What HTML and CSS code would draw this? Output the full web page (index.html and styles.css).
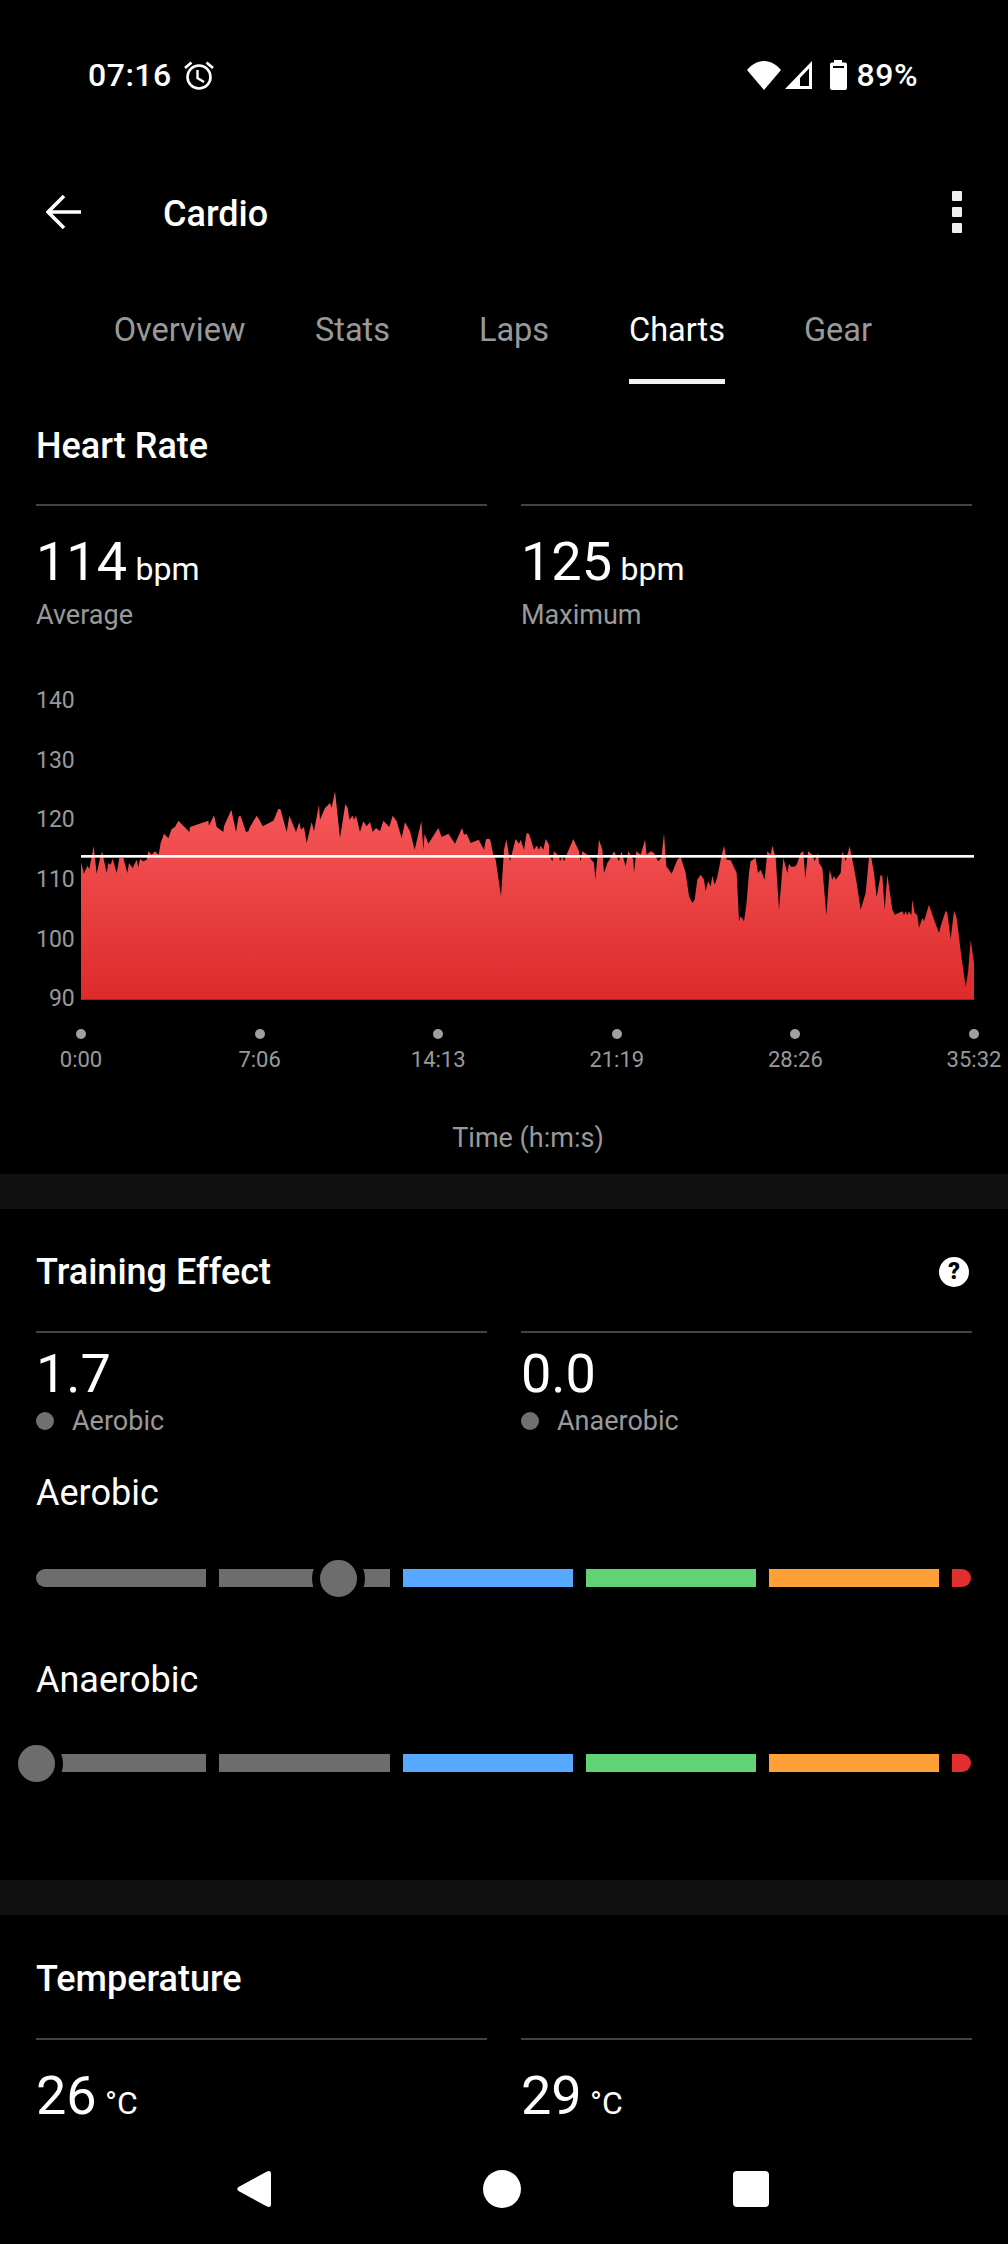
FILE: index.html
```html
<!DOCTYPE html>
<html lang="en">
<head>
<meta charset="utf-8">
<title>Cardio</title>
<link rel="stylesheet" href="styles.css">
</head>
<body>
<div class="screen">
  <main class="content">
    <div class="statusbar">
      <div class="status-left">
        <span>07:16</span>
        <svg class="alarm" viewBox="0 0 30 29"><circle cx="15" cy="16" r="11.500" fill="none" stroke="#fff" stroke-width="2.600"/><path d="M13.500 9V17L20 21" fill="none" stroke="#fff" stroke-width="2.400"/><path d="M1 7L7.500 1.500M29 7L22.500 1.500" stroke="#fff" stroke-width="2.800" fill="none"/></svg>
      </div>
      <div class="status-right">
        <svg class="wifi" viewBox="0 0 34 29"><path d="M17 29L0 9C4 4 10 0 17 0S30 4 34 9Z" fill="#fff"/></svg>
        <svg class="signal" viewBox="0 0 27 28"><path fill-rule="evenodd" d="M27 0V28H0ZM24 7.500L15 17V25H24Z" fill="#fff"/></svg>
        <svg class="battery" viewBox="0 0 17 30"><path fill-rule="evenodd" d="M4 0H12V2.500H15Q17 2.500 17 4.500V28Q17 30 15 30H2Q0 30 0 28V4.500Q0 2.500 2 2.500H4ZM3 6V8H14V6Z" fill="#fff"/></svg>
        <span>89%</span>
      </div>
    </div>

    <header class="toolbar">
      <svg class="back" viewBox="0 0 36 36"><path d="M35 18H3M18 2L2 18L18 34" fill="none" stroke="#fff" stroke-width="3.600"/></svg>
      <h1 class="toolbar-title">Cardio</h1>
      <div class="overflow"><i></i><i></i><i></i></div>
    </header>

    <nav class="tabs">
      <div class="tab"><span>Overview</span></div>
      <div class="tab"><span>Stats</span></div>
      <div class="tab"><span>Laps</span></div>
      <div class="tab active"><span>Charts</span></div>
      <div class="tab"><span>Gear</span></div>
    </nav>

    <section class="card card-hr">
      <h2 class="title">Heart Rate</h2>
      <div class="stats">
        <div class="stat">
          <div class="value">114 <small>bpm</small></div>
          <div class="label">Average</div>
        </div>
        <div class="stat">
          <div class="value">125 <small>bpm</small></div>
          <div class="label">Maximum</div>
        </div>
      </div>

      <div class="chart">
        <div class="y-axis">
          <span>140</span><span>130</span><span>120</span><span>110</span><span>100</span><span>90</span>
        </div>
        <svg class="plot" viewBox="243 100 2679 680" preserveAspectRatio="none">
          <defs>
            <linearGradient id="hr" x1="0" y1="0" x2="0" y2="1">
              <stop offset="0" stop-color="#f75a5c"/>
              <stop offset="1" stop-color="#de2a2b"/>
            </linearGradient>
          </defs>
          <path fill="url(#hr)" d="M243 780V368L252 402 262 378 268 388 281 320 290 402 298 365 306 335 320 400 325 370 332 375 338 358 350 400 358 355 370 355 382 400 387 370 398 385 410 360 415 382 420 358 430 365 440 360 445 335 455 345 465 335 476 345 482 310 492 282 505 296 515 268 525 262 535 243 568 277 570 262 625 243 627 258 642 227 650 262 670 277 672 260 694 210 708 277 716 230 722 230 738 277 745 275 750 262 770 228 778 240 788 260 820 243 835 208 841 208 860 277 868 228 888 277 898 248 903 270 912 262 920 310 935 247 942 275 957 195 960 240 975 205 990 190 995 205 1005 155 1020 295 1036 193 1043 205 1048 240 1058 228 1062 240 1068 228 1080 277 1090 245 1100 260 1110 247 1118 277 1128 265 1140 275 1150 243 1168 262 1178 228 1190 245 1205 295 1215 248 1230 275 1244 330 1264 245 1270 330 1274 282 1285 312 1315 265 1325 292 1345 282 1365 312 1386 265 1392 285 1400 282 1412 310 1436 300 1452 330 1458 298 1470 298 1480 345 1487 360 1503 470 1512 330 1519 300 1530 365 1547 298 1557 312 1562 300 1572 330 1580 280 1587 282 1602 330 1610 318 1617 330 1622 318 1630 330 1637 298 1647 315 1647 345 1657 365 1662 335 1677 350 1680 365 1687 352 1692 365 1702 340 1720 298 1737 335 1742 365 1747 335 1762 345 1782 370 1786 420 1797 300 1807 330 1812 400 1822 370 1832 355 1842 335 1857 365 1864 335 1877 380 1885 335 1900 360 1902 400 1909 335 1922 345 1935 300 1940 345 1952 335 1962 340 1974 365 1984 355 1992 282 1999 380 2015 402 2032 360 2042 352 2057 400 2067 470 2077 490 2084 480 2092 420 2102 405 2112 420 2117 455 2124 425 2132 440 2137 408 2144 435 2152 412 2162 360 2172 318 2180 360 2192 362 2210 400 2217 545 2222 530 2232 545 2239 497 2247 400 2252 365 2267 355 2274 400 2282 390 2294 420 2302 335 2312 345 2317 318 2327 355 2337 510 2350 355 2362 400 2367 372 2374 382 2387 380 2392 370 2402 340 2410 335 2416 418 2424 335 2437 345 2444 365 2454 340 2457 370 2467 385 2479 527 2489 390 2497 420 2502 408 2507 420 2522 400 2527 335 2537 365 2549 320 2562 385 2570 430 2582 510 2597 460 2607 355 2614 355 2622 400 2630 472 2642 405 2647 410 2654 510 2662 405 2677 510 2684 525 2707 515 2712 527 2717 515 2722 527 2727 515 2734 527 2737 480 2744 520 2752 527 2757 565 2767 535 2772 545 2787 495 2802 540 2817 580 2822 560 2837 513 2842 520 2852 598 2862 513 2870 535 2884 650 2897 742 2904 700 2912 602 2922 670V780Z"/>
          <rect class="avg" x="243" y="346" width="2679" height="8"/>
        </svg>
        <div class="x-axis">
          <div class="tick"><i></i><span>0:00</span></div>
          <div class="tick"><i></i><span>7:06</span></div>
          <div class="tick"><i></i><span>14:13</span></div>
          <div class="tick"><i></i><span>21:19</span></div>
          <div class="tick"><i></i><span>28:26</span></div>
          <div class="tick"><i></i><span>35:32</span></div>
        </div>
        <div class="x-title">Time (h:m:s)</div>
      </div>
    </section>

    <div class="gap"></div>

    <section class="card card-te">
      <div class="title-row">
        <h2 class="title">Training Effect</h2>
        <span class="help">?</span>
      </div>
      <div class="stats">
        <div class="stat stat-te">
          <div class="value">1.7</div>
          <div class="legend"><i></i>Aerobic</div>
        </div>
        <div class="stat stat-te">
          <div class="value">0.0</div>
          <div class="legend"><i></i>Anaerobic</div>
        </div>
      </div>

      <h3 class="subhead subhead-first">Aerobic</h3>
      <div class="scale">
        <i class="seg grey first"></i><i class="seg grey"></i><i class="seg blue"></i><i class="seg green"></i><i class="seg orange"></i><i class="seg red"></i>
        <b class="thumb thumb-aerobic"></b>
      </div>

      <h3 class="subhead subhead-second">Anaerobic</h3>
      <div class="scale">
        <i class="seg grey first"></i><i class="seg grey"></i><i class="seg blue"></i><i class="seg green"></i><i class="seg orange"></i><i class="seg red"></i>
        <b class="thumb thumb-anaerobic"></b>
      </div>
    </section>

    <div class="gap"></div>

    <section class="card card-temp">
      <h2 class="title">Temperature</h2>
      <div class="stats">
        <div class="stat">
          <div class="value">26 <small>°C</small></div>
        </div>
        <div class="stat">
          <div class="value">29 <small>°C</small></div>
        </div>
      </div>
    </section>
  </main>

  <footer class="navbar">
    <svg class="nav-back" viewBox="0 0 36 38"><path d="M2.500 17L31 1.500Q35 0 35 4V34Q35 38 31 36.500L2.500 21Q0 19 2.500 17Z" fill="#fff"/></svg>
    <span class="nav-home"></span>
    <span class="nav-recent"></span>
  </footer>
</div>
</body>
</html>
```

FILE: styles.css
```css
* { box-sizing: border-box; }
html, body { margin: 0; padding: 0; background: #000; }
body { font-family: Roboto, "Liberation Sans", sans-serif; color: #fff; }
h1, h2, h3 { margin: 0; font-weight: 400; }

.screen { height: 2244px; display: flex; flex-direction: column; overflow: hidden; }
.content { flex: 1; min-height: 0; overflow: hidden; }

.statusbar { height: 150px; display: flex; justify-content: space-between; align-items: center; padding: 0 90px 0 88px; font-size: 32px; letter-spacing: .5px; font-weight: 500; }
.status-left, .status-right { display: flex; align-items: center; }
.alarm { width: 30px; height: 29px; margin-left: 12px; }
.wifi { width: 34px; height: 29px; }
.signal { width: 27px; height: 28px; margin-left: 4px; }
.battery { width: 17px; height: 30px; margin-left: 18px; margin-top: -1px; }
.status-right span { margin-left: 10px; }

.toolbar { height: 126px; display: flex; align-items: center; padding: 0 46px 2px; }
.back { width: 36px; height: 36px; }
.toolbar-title { font-size: 36px; font-weight: 500; margin-left: 81px; margin-top: 4px; flex: 1; }
.overflow { display: flex; flex-direction: column; gap: 6px; }
.overflow i { display: block; width: 10px; height: 10px; background: #eee; border-radius: 1px; }

.tabs { height: 108px; padding-left: 98px; display: grid; grid-template-columns: 163px 183px 140px 186px 136px; }
.tab { text-align: center; font-size: 32.500px; color: #999; }
.tab span { display: inline-block; height: 108px; line-height: 108px; }
.tab.active { color: #fff; }
.tab.active span { border-bottom: 5px solid #f2f2f2; }

.card { padding: 0 36px; }
.card-hr { height: 790px; padding-top: 42px; }
.card-te { height: 671px; padding-top: 43px; }
.card-temp { padding-top: 44px; }
.gap { height: 35px; background: #111; }

.title { font-size: 36px; line-height: 40px; font-weight: 500; }
.title-row { display: flex; justify-content: space-between; align-items: center; height: 40px; padding-right: 3px; }
.help { width: 30px; height: 30px; border-radius: 50%; background: #fff; color: #000; font-size: 23px; font-weight: 900; line-height: 30px; text-align: center; }

.stats { margin-top: 38px; display: grid; grid-template-columns: 451px 451px; column-gap: 34px; }
.card-te .stats { margin-top: 39px; }
.card-temp .stats { margin-top: 39px; }
.stat { border-top: 2px solid #444; padding-top: 26px; }
.stat-te { padding-top: 11px; }
.value { font-size: 54px; line-height: 60px; word-spacing: -5px; }
.value small { font-size: 32px; word-spacing: 0; }
.label { font-size: 27px; line-height: 34px; color: #999; margin-top: -1px; }
.legend { display: flex; align-items: center; font-size: 27px; line-height: 34px; color: #999; }
.legend i { width: 18px; height: 18px; border-radius: 50%; background: #707070; margin-right: 18px; }

.chart { display: grid; grid-template-columns: 45px 893px; grid-template-rows: 330px auto auto; margin-top: 38px; }
.y-axis { height: 357.600px; padding-top: 1px; display: grid; grid-auto-rows: 59.600px; justify-items: end; align-items: center; font-size: 23px; color: #999; padding-right: 11px; }
.plot { width: 893px; height: 226.670px; margin-top: 103.330px; }
.avg { fill: #fff; }
.x-axis { grid-column: 2; display: flex; justify-content: space-between; padding-top: 29px; }
.tick { width: 0; display: flex; flex-direction: column; align-items: center; }
.tick i { flex: none; width: 10px; height: 10px; border-radius: 50%; background: #a0a0a0; }
.tick span { font-size: 22px; line-height: 30px; color: #999; margin-top: 6px; }
.x-title { grid-column: 1 / 3; margin-top: 46px; text-align: center; font-size: 27px; line-height: 34px; color: #999; padding-left: 46px; }

.subhead { font-size: 36px; line-height: 40px; }
.subhead-first { margin-top: 35px; }
.subhead-second { margin-top: 73px; }

.scale { position: relative; display: grid; grid-template-columns: 170px 171px 170px 170px 170px 19px; column-gap: 13px; align-items: center; height: 18px; }
.subhead-first + .scale { margin-top: 56px; }
.subhead-second + .scale { margin-top: 54px; }
.seg { display: block; height: 18px; }
.grey { background: #6d6d6d; }
.blue { background: #57a9ff; }
.green { background: #62d277; }
.orange { background: #ff9f38; }
.red { background: #e12e2e; border-radius: 0 9px 9px 0; }
.first { border-radius: 9px 0 0 9px; }
.thumb { position: absolute; top: 50%; width: 53px; height: 53px; margin: -26.500px 0 0 -26.500px; border-radius: 50%; background: #6d6d6d; border: 8px solid #000; }
.thumb-aerobic { left: 302.500px; }
.thumb-anaerobic { left: 0; }

.navbar { height: 108px; flex: none; background: #000; display: flex; align-items: center; padding-bottom: 2px; }
.nav-back { width: 36px; height: 38px; margin-left: 236px; }
.nav-home { width: 38px; height: 38px; margin-left: 211px; border-radius: 50%; background: #fff; }
.nav-recent { width: 36px; height: 36px; margin-left: 212px; border-radius: 4px; background: #fff; }
```
